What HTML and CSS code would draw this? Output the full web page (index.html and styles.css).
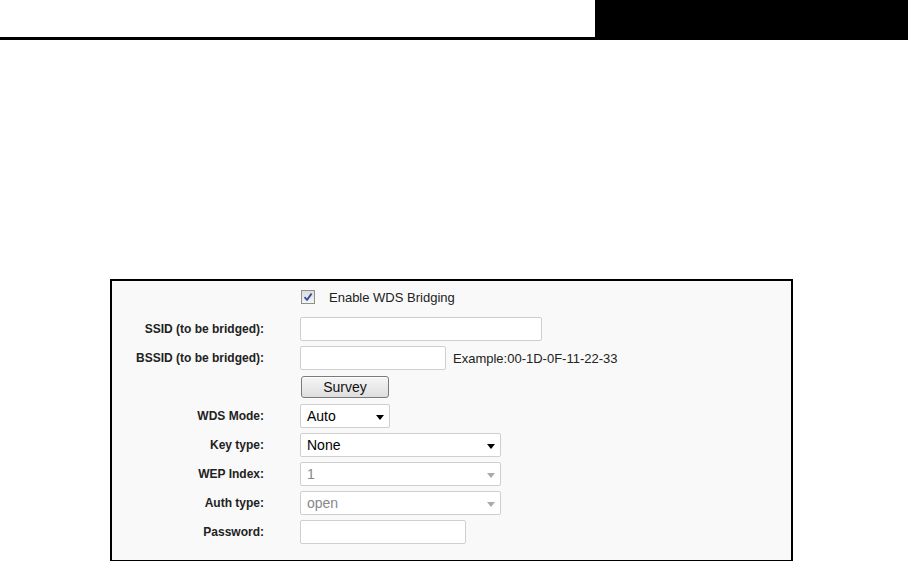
FILE: index.html
```html
<!DOCTYPE html>
<html lang="en">
<head>
    <meta charset="UTF-8">
    <title>Wireless Settings - WDS</title>
    <link rel="stylesheet" href="styles.css">
</head>
<body>
    <!-- page header -->
    <div class="header">
        <div class="header-rule"></div>
        <div class="header-tab"></div>
    </div>

    <!-- WDS panel -->
    <div class="panel">
        <div class="row row-first">
            <div class="label"></div>
            <label class="check-line">
                <span class="checkbox">
                    <svg width="10" height="10" viewBox="0 0 10 10"><path d="M1.5 5.2 L4 7.8 L8.6 1.6" fill="none" stroke="#2b4f9c" stroke-width="1.8"/></svg>
                </span>
                Enable WDS Bridging
            </label>
        </div>
        <div class="row">
            <div class="label">SSID (to be bridged):</div>
            <input type="text" class="field field-wide">
        </div>
        <div class="row">
            <div class="label">BSSID (to be bridged):</div>
            <input type="text" class="field field-mid">
            <span class="hint">Example:00-1D-0F-11-22-33</span>
        </div>
        <div class="row">
            <div class="label"></div>
            <button class="btn">Survey</button>
        </div>
        <div class="row">
            <div class="label">WDS Mode:</div>
            <div class="select select-short">
                <span>Auto</span>
                <svg class="arrow" width="8" height="5" viewBox="0 0 8 5"><path d="M0 0 H8 L4 5 Z" fill="#000"/></svg>
            </div>
        </div>
        <div class="row">
            <div class="label">Key type:</div>
            <div class="select">
                <span>None</span>
                <svg class="arrow" width="8" height="5" viewBox="0 0 8 5"><path d="M0 0 H8 L4 5 Z" fill="#000"/></svg>
            </div>
        </div>
        <div class="row">
            <div class="label">WEP Index:</div>
            <div class="select disabled">
                <span>1</span>
                <svg class="arrow" width="8" height="5" viewBox="0 0 8 5"><path d="M0 0 H8 L4 5 Z" fill="#aaa"/></svg>
            </div>
        </div>
        <div class="row">
            <div class="label">Auth type:</div>
            <div class="select disabled">
                <span>open</span>
                <svg class="arrow" width="8" height="5" viewBox="0 0 8 5"><path d="M0 0 H8 L4 5 Z" fill="#aaa"/></svg>
            </div>
        </div>
        <div class="row">
            <div class="label">Password:</div>
            <input type="password" class="field field-pass">
        </div>
    </div>
</body>
</html>
```

FILE: styles.css
```css
body {
    margin: 0;
    font-family: "Liberation Sans", Arial, sans-serif;
    font-size: 12px;
    color: #222;
    background-color: white;
    overflow: hidden;
}
.header {
    display: flex;
    height: 40px;
}
.header-rule {
    width: 595px;
    border-bottom: 3px solid #000;
    box-sizing: border-box;
}
.header-tab {
    flex-grow: 1;
    background-color: #000;
}
.panel {
    width: 683px;
    height: 283px;
    margin: 239px 0 0 110px;
    border: 2px solid #000;
    background-color: #f9f9f9;
    box-sizing: border-box;
    padding-top: 4px;
}
.row {
    display: flex;
    align-items: center;
    height: 24px;
    margin-bottom: 5px;
}
.row-first {
    margin-bottom: 8px;
}
.label {
    width: 152px;
    flex-shrink: 0;
    margin-right: 36px;
    text-align: right;
    font-weight: bold;
    color: #222;
}
.check-line {
    display: flex;
    align-items: center;
    gap: 14px;
    font-size: 13px;
    color: #222;
    padding-left: 1px;
}
.checkbox {
    width: 12px;
    height: 12px;
    border: 1px solid #8f8f8f;
    background: linear-gradient(#dcdcdc, #f4f4f4);
    display: flex;
    align-items: center;
    justify-content: center;
}
.field {
    height: 24px;
    box-sizing: border-box;
    border: 1px solid #cfcfcf;
    border-radius: 2px;
    background-color: white;
    margin: 0;
    padding: 0 6px;
    font-family: inherit;
    font-size: 14px;
}
.field-wide {
    width: 242px;
}
.field-mid {
    width: 146px;
}
.field-pass {
    width: 166px;
}
.hint {
    margin-left: 7px;
    font-size: 13px;
    color: #222;
}
.btn {
    width: 88px;
    height: 22px;
    margin: 0 0 0 1px;
    padding: 0;
    border: 1px solid #7a7a7a;
    border-radius: 3px;
    background: linear-gradient(#f6f6f6, #dedede);
    box-shadow: inset 0 1px 0 #fff;
    font-family: inherit;
    font-size: 14px;
    color: #111;
}
.select {
    position: relative;
    width: 201px;
    height: 24px;
    box-sizing: border-box;
    border: 1px solid #cfcfcf;
    border-radius: 2px;
    background-color: white;
    display: flex;
    align-items: center;
    padding-left: 6px;
    font-size: 14px;
    color: #000;
}
.select-short {
    width: 90px;
}
.select .arrow {
    position: absolute;
    right: 5px;
    top: 10px;
}
.select.disabled {
    color: #888;
}
```
